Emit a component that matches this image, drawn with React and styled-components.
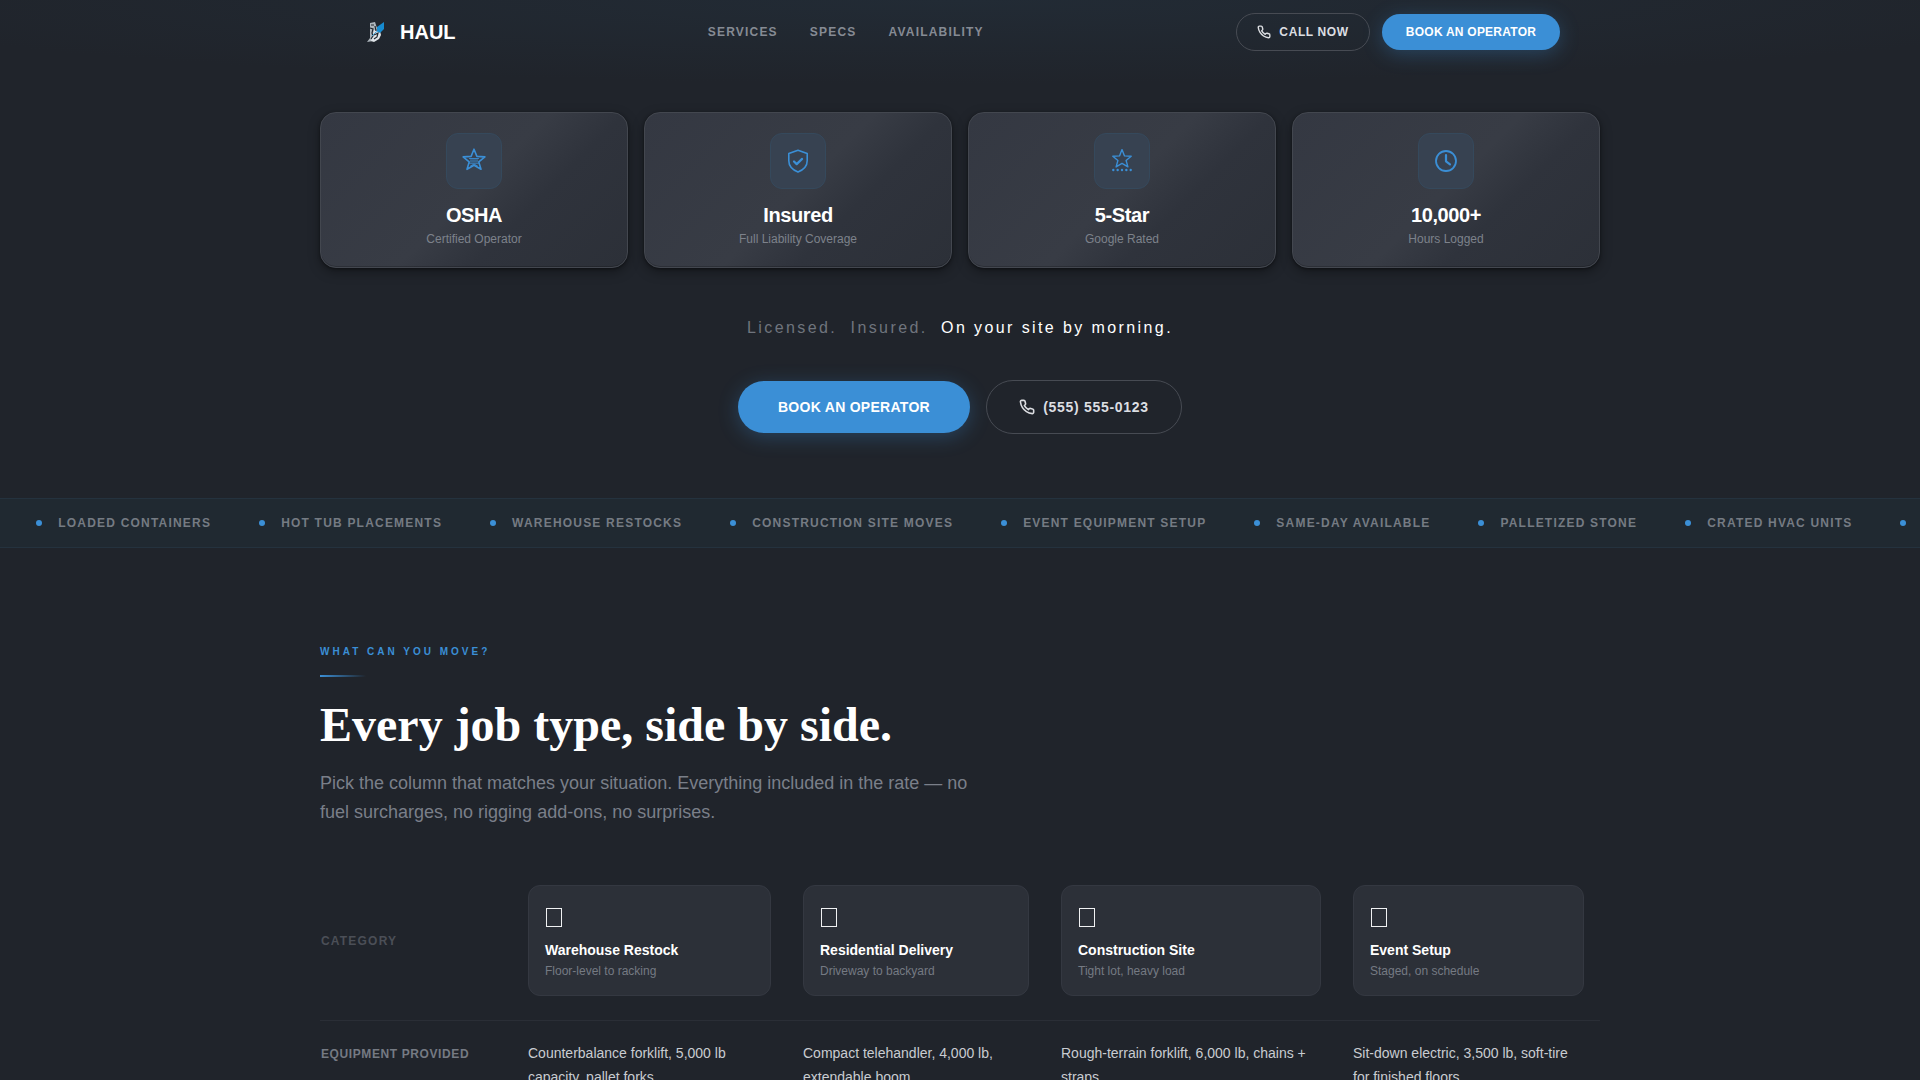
import React from "react";
import styled, { createGlobalStyle } from "styled-components";

const Global = createGlobalStyle`
  * { box-sizing: border-box; }
  body { margin: 0; background: #20242b; }
`;

const Page = styled.div`
  height: 1080px;
  overflow: hidden;
  color: #fff;
  font-family: "Liberation Sans", Arial, sans-serif;
  background: radial-gradient(ellipse 1150px 84px at 50% 0, #222b35 0%, rgba(34, 43, 53, 0) 100%), #20242b;
`;

const Nav = styled.nav`
  width: 1200px;
  height: 64px;
  margin: 0 auto;
  display: flex;
  align-items: center;
  justify-content: space-between;
`;

const Brand = styled.div`
  display: flex;
  align-items: center;
  gap: 8px;
  font-size: 20px;
  font-weight: 700;
  letter-spacing: 0;
`;

const NavLinks = styled.div`
  display: flex;
  gap: 32px;
`;

const NavLink = styled.a`
  font-size: 12px;
  font-weight: 700;
  letter-spacing: 1.2px;
  color: #868b94;
`;

const Actions = styled.div`
  display: flex;
  align-items: center;
  justify-content: center;
  gap: ${(p) => p.$gap}px;
`;

const Button = styled.button`
  display: flex;
  align-items: center;
  justify-content: center;
  gap: 8px;
  padding: 0;
  border-radius: 999px;
  font-family: inherit;
  font-weight: 700;
  white-space: nowrap;
  font-size: ${(p) => (p.$large ? 14 : 12)}px;
`;

const PrimaryButton = styled(Button)`
  width: ${(p) => (p.$large ? 232 : 178)}px;
  height: ${(p) => (p.$large ? 52 : 36)}px;
  border: 0;
  background: #3b8fd6;
  color: #fff;
  letter-spacing: ${(p) => (p.$large ? 0.28 : 0.24)}px;
  box-shadow: 0 4px 20px rgba(59, 143, 214, 0.3);
`;

const GhostButton = styled(Button)`
  width: ${(p) => (p.$large ? 196 : 134)}px;
  height: ${(p) => (p.$large ? 54 : 38)}px;
  border: 1px solid #474b53;
  background: transparent;
  color: #dcdee2;
  letter-spacing: ${(p) => (p.$large ? 0.7 : 0.6)}px;
`;

const StatGrid = styled.section`
  width: 1280px;
  margin: 48px auto 0;
  display: grid;
  grid-template-columns: repeat(4, 1fr);
  gap: 16px;
`;

const StatCard = styled.article`
  height: 156px;
  padding-top: 20px;
  display: flex;
  flex-direction: column;
  align-items: center;
  border: 1px solid #43474f;
  border-radius: 16px;
  background: linear-gradient(135deg, #343842 0%, #383c45 50%, #2f333c 66%, #2c3038 100%);
  box-shadow: 0 4px 12px rgba(0, 0, 0, 0.35), 0 1px 3px rgba(0, 0, 0, 0.4), inset 0 -1px 0 rgba(0, 0, 0, 0.2);
`;

const StatIcon = styled.div`
  width: 56px;
  height: 56px;
  display: grid;
  place-items: center;
  border: 1px solid #35495c;
  border-radius: 12px;
  background: #374251;
  color: #3b8fd6;
`;

const StatTitle = styled.h3`
  margin: 14px 0 0;
  font-size: 20px;
  line-height: 24px;
  letter-spacing: -0.4px;
`;

const StatText = styled.p`
  margin: 4px 0 0;
  font-size: 12px;
  line-height: 16px;
  color: #7d828b;
`;

const Tagline = styled.p`
  margin: 48px 0 41px;
  display: flex;
  justify-content: center;
  gap: 13.5px;
  font-size: 16px;
  line-height: 23px;
  letter-spacing: 2.4px;
  color: #6f747d;
`;

const Strong = styled.span`
  color: #fff;
`;

const Ticker = styled.div`
  height: 50px;
  margin-top: 64px;
  padding-left: 36.3px;
  display: flex;
  align-items: center;
  gap: 48px;
  overflow: hidden;
  border-top: 1px solid #24323e;
  border-bottom: 1px solid #24323e;
  background: #202931;
`;

const TickerItem = styled.span`
  flex: none;
  display: flex;
  align-items: center;
  gap: 16px;
  font-size: 12px;
  font-weight: 700;
  letter-spacing: 1.2px;
  color: #757b83;

  &::before {
    content: "";
    width: 6px;
    height: 6px;
    border-radius: 50%;
    background: #3b8fd6;
  }
`;

const Section = styled.section`
  width: 1280px;
  margin: 97px auto 0;
`;

const Eyebrow = styled.div`
  font-size: 10px;
  line-height: 14px;
  font-weight: 700;
  letter-spacing: 3px;
  color: #3b8fd6;
`;

const Rule = styled.div`
  width: 46px;
  height: 2px;
  margin-top: 16px;
  background: linear-gradient(90deg, #3b8fd6, rgba(59, 143, 214, 0));
`;

const Heading = styled.h2`
  margin: 20px 0 0;
  font-family: "Liberation Serif", "Times New Roman", serif;
  font-size: 48px;
  line-height: 56px;
  font-weight: 700;
`;

const Lead = styled.p`
  width: 660px;
  margin: 16px 0 0;
  font-size: 18px;
  line-height: 29px;
  color: #7a7f89;
`;

const Table = styled.div`
  margin-top: 58px;
`;

const Row = styled.div`
  display: grid;
  grid-template-columns: 208px 275px 258px 292px 247px;
  align-items: ${(p) => (p.$head ? "center" : "start")};
  padding: ${(p) => (p.$head ? "0 0 24px" : "20px 0")};
  border-bottom: 1px solid #2a2e36;
`;

const RowLabel = styled.div`
  padding-top: ${(p) => (p.$dim ? 0 : 1)}px;
  padding-left: 1px;
  font-size: 12px;
  line-height: 24px;
  font-weight: 700;
  letter-spacing: ${(p) => (p.$dim ? 1.2 : 0.6)}px;
  color: ${(p) => (p.$dim ? "#4b4f57" : "#757a83")};
`;

const Cell = styled.div`
  padding-right: 16px;
  font-size: 14px;
  line-height: 24px;
  color: #c9ccd1;
`;

const JobCard = styled.div`
  height: 111px;
  margin-right: ${(p) => p.$gap}px;
  padding: 17px 16px;
  border: 1px solid #343841;
  border-radius: 12px;
  background: #2c3038;
`;

const JobGlyph = styled.div`
  height: 29px;
  padding: 5px 1px 0;

  &::before {
    content: "";
    display: block;
    width: 14px;
    height: 17px;
    border: 1px solid #f0f1f3;
  }
`;

const JobTitle = styled.div`
  margin-top: 8px;
  font-size: 14px;
  line-height: 20px;
  font-weight: 700;
`;

const JobText = styled.div`
  margin-top: 3px;
  font-size: 12px;
  line-height: 16px;
  color: #757a83;
`;

const Logo = () => (
  <svg width="32" height="32" viewBox="-2 0 32 32">
    <path d="M8 7l5-1 2 6-1 5 1 4-4 4-6 1 3-4z" fill="#aeb6bc" />
    <path d="M12 14l6 1 1 4-2 4-5 3-3-1z" fill="#dfe4e8" />
    <path d="M9 9h3M8 12l3 1-1 4 1 3-2 3M13 10l1 5M12 19l4-2-1 4-3 2" stroke="#20272f" strokeWidth="1.2" fill="none" />
    <path d="M10 20l4-4 4-1" stroke="#4aa8dc" strokeWidth="1" fill="none" />
    <path d="M15 11l7-5v7l-4 4-3-2z" fill="#168bd0" />
  </svg>
);

const Phone = ({ size }) => (
  <svg width={size} height={size} viewBox="0 0 24 24" fill="none" stroke="currentColor" strokeWidth="2.4" strokeLinecap="round" strokeLinejoin="round">
    <path d="M22 16.92v3a2 2 0 0 1-2.18 2 19.79 19.79 0 0 1-8.63-3.07 19.5 19.5 0 0 1-6-6 19.79 19.79 0 0 1-3.07-8.67A2 2 0 0 1 4.11 2h3a2 2 0 0 1 2 1.72 12.84 12.84 0 0 0 .7 2.81 2 2 0 0 1-.45 2.11L8.09 9.91a16 16 0 0 0 6 6l1.27-1.27a2 2 0 0 1 2.11-.45 12.84 12.84 0 0 0 2.81.7A2 2 0 0 1 22 16.92z" />
  </svg>
);

const Svg = ({ children }) => (
  <svg width="28" height="28" viewBox="0 0 28 28" fill="none" stroke="currentColor" strokeWidth="1.6" strokeLinecap="round" strokeLinejoin="round">
    {children}
  </svg>
);

const BadgeStar = () => (
  <Svg>
    <path d="M14 2.2l2.9 7.2 8 .5-6.1 5 2.2 7.4-7-4-7 4 2.2-7.4-6.1-5 8-.5z" />
    <path strokeWidth="0.9" d="M9.5 11.5h9M9.5 16.2h9M10.5 19l3.5-2 3.5 2M11 12.6v2.2M13 12.6v2.2M15 12.6v2.2M17 12.6v2.2" />
  </Svg>
);

const Shield = () => (
  <Svg>
    <path d="M14 3.3l9.2 3.2v7.3c0 5.5-4.1 9.2-9.2 11.3-5.1-2.1-9.2-5.8-9.2-11.3V6.5z" />
    <path strokeWidth="2.2" d="M10 14.5l2.7 2.6 5.4-5.2" />
  </Svg>
);

const DottedStar = () => (
  <Svg>
    <path strokeWidth="1.4" d="M14 2.6l2.5 6.3 6.7.4-5.1 4.2 1.8 6.4-5.9-3.5-5.9 3.5 1.8-6.4-5.1-4.2 6.7-.4z" />
    {[5.3, 9.65, 14, 18.35, 22.7].map((x) => (
      <circle key={x} cx={x} cy="23" r="1.2" fill="currentColor" stroke="none" />
    ))}
  </Svg>
);

const Clock = () => (
  <Svg>
    <circle cx="14" cy="14" r="10" strokeWidth="1.8" />
    <path strokeWidth="2.2" d="M14 8v6.3l4 3" />
  </Svg>
);

const stats = [
  { Icon: BadgeStar, title: "OSHA", text: "Certified Operator" },
  { Icon: Shield, title: "Insured", text: "Full Liability Coverage" },
  { Icon: DottedStar, title: "5-Star", text: "Google Rated" },
  { Icon: Clock, title: "10,000+", text: "Hours Logged" },
];

const tickerItems = [
  "LOADED CONTAINERS",
  "HOT TUB PLACEMENTS",
  "WAREHOUSE RESTOCKS",
  "CONSTRUCTION SITE MOVES",
  "EVENT EQUIPMENT SETUP",
  "SAME-DAY AVAILABLE",
  "PALLETIZED STONE",
  "CRATED HVAC UNITS",
  "",
];

const jobs = [
  { title: "Warehouse Restock", text: "Floor-level to racking", gap: 32, gear: ["Counterbalance forklift, 5,000 lb", "capacity, pallet forks"] },
  { title: "Residential Delivery", text: "Driveway to backyard", gap: 32, gear: ["Compact telehandler, 4,000 lb,", "extendable boom"] },
  { title: "Construction Site", text: "Tight lot, heavy load", gap: 32, gear: ["Rough-terrain forklift, 6,000 lb, chains +", "straps"] },
  { title: "Event Setup", text: "Staged, on schedule", gap: 16, gear: ["Sit-down electric, 3,500 lb, soft-tire", "for finished floors"] },
];

export default function App() {
  return (
    <>
      <Global />
      <Page>
        <Nav>
          <Brand>
            <Logo />
            HAUL
          </Brand>
          <NavLinks>
            <NavLink>SERVICES</NavLink>
            <NavLink>SPECS</NavLink>
            <NavLink>AVAILABILITY</NavLink>
          </NavLinks>
          <Actions $gap={12}>
            <GhostButton>
              <Phone size={14} />
              CALL NOW
            </GhostButton>
            <PrimaryButton>BOOK AN OPERATOR</PrimaryButton>
          </Actions>
        </Nav>

        <StatGrid>
          {stats.map(({ Icon, title, text }) => (
            <StatCard key={title}>
              <StatIcon>
                <Icon />
              </StatIcon>
              <StatTitle>{title}</StatTitle>
              <StatText>{text}</StatText>
            </StatCard>
          ))}
        </StatGrid>

        <Tagline>
          <span>Licensed.</span>
          <span>Insured.</span>
          <Strong>On your site by morning.</Strong>
        </Tagline>

        <Actions $gap={16}>
          <PrimaryButton $large>BOOK AN OPERATOR</PrimaryButton>
          <GhostButton $large>
            <Phone size={16} />
            (555) 555-0123
          </GhostButton>
        </Actions>

        <Ticker>
          {tickerItems.map((item) => (
            <TickerItem key={item}>{item}</TickerItem>
          ))}
        </Ticker>

        <Section>
          <Eyebrow>WHAT CAN YOU MOVE?</Eyebrow>
          <Rule />
          <Heading>Every job type, side by side.</Heading>
          <Lead>
            Pick the column that matches your situation. Everything included in the rate — no fuel surcharges, no
            rigging add-ons, no surprises.
          </Lead>

          <Table>
            <Row $head>
              <RowLabel $dim>CATEGORY</RowLabel>
              {jobs.map((job) => (
                <JobCard key={job.title} $gap={job.gap}>
                  <JobGlyph />
                  <JobTitle>{job.title}</JobTitle>
                  <JobText>{job.text}</JobText>
                </JobCard>
              ))}
            </Row>
            <Row>
              <RowLabel>EQUIPMENT PROVIDED</RowLabel>
              {jobs.map((job) => (
                <Cell key={job.title}>
                  {job.gear[0]}
                  <br />
                  {job.gear[1]}
                </Cell>
              ))}
            </Row>
          </Table>
        </Section>
      </Page>
    </>
  );
}
